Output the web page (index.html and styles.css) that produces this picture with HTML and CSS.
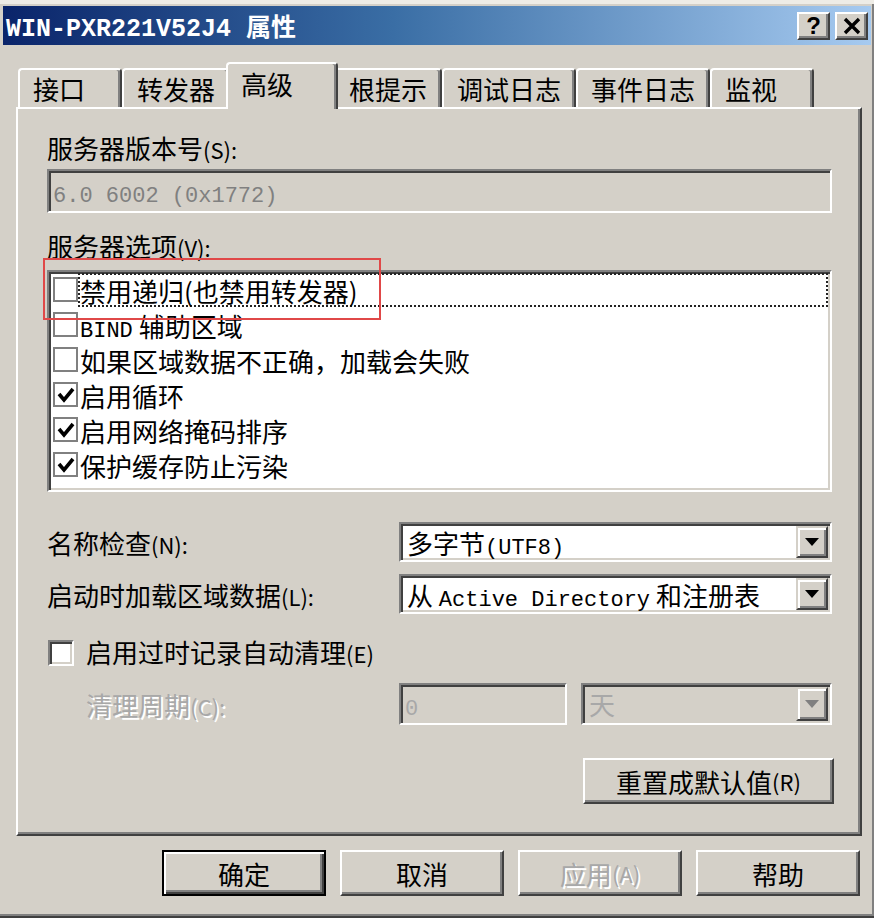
FILE: index.html
```html
<!DOCTYPE html>
<html lang="zh-CN">
<head>
  <meta charset="UTF-8" />
  <title>WIN-PXR221V52J4 属性</title>
  <link rel="stylesheet" href="styles.css">
</head>
<body>

<div class="window">
  <div class="titlebar">
    <span class="title">WIN-PXR221V52J4 属性</span>
    <div class="title-buttons">
      <span class="tbtn">?</span>
      <span class="tbtn">
        <svg width="18" height="18" viewBox="0 0 18 18"><path d="M2 2 L16 16 M16 2 L2 16" stroke="#000" stroke-width="3.4"/></svg>
      </span>
    </div>
  </div>

  <div class="tabs">
    <div class="tab">接口</div>
    <div class="tab">转发器</div>
    <div class="tab active">高级</div>
    <div class="tab">根提示</div>
    <div class="tab">调试日志</div>
    <div class="tab">事件日志</div>
    <div class="tab">监视</div>
  </div>

  <div class="panel">
    <div class="label">服务器版本号<span class="acc">(S):</span></div>
    <div class="field version"><span class="mono">6.0 6002 (0x1772)</span></div>

    <div class="label options-label">服务器选项<span class="acc">(V):</span></div>
    <div class="field listbox">
      <div class="row">
        <span class="cb"></span>
        <span class="item focus">禁用递归(也禁用转发器)</span>
      </div>
      <div class="row">
        <span class="cb"></span>
        <span class="item"><span class="mono">BIND</span> 辅助区域</span>
      </div>
      <div class="row">
        <span class="cb"></span>
        <span class="item">如果区域数据不正确，加载会失败</span>
      </div>
      <div class="row">
        <span class="cb"><svg width="20" height="20" viewBox="0 0 20 20"><path d="M3 9 L8 15 L17 4" fill="none" stroke="#000" stroke-width="3.6"/></svg></span>
        <span class="item">启用循环</span>
      </div>
      <div class="row">
        <span class="cb"><svg width="20" height="20" viewBox="0 0 20 20"><path d="M3 9 L8 15 L17 4" fill="none" stroke="#000" stroke-width="3.6"/></svg></span>
        <span class="item">启用网络掩码排序</span>
      </div>
      <div class="row">
        <span class="cb"><svg width="20" height="20" viewBox="0 0 20 20"><path d="M3 9 L8 15 L17 4" fill="none" stroke="#000" stroke-width="3.6"/></svg></span>
        <span class="item">保护缓存防止污染</span>
      </div>
    </div>

    <div class="form-row first">
      <div class="form-label">名称检查<span class="acc">(N):</span></div>
      <div class="field combo">
        <span class="combo-text">多字节<span class="mono">(UTF8)</span></span>
        <span class="drop"><span class="arrow"></span></span>
      </div>
    </div>
    <div class="form-row">
      <div class="form-label">启动时加载区域数据<span class="acc">(L):</span></div>
      <div class="field combo">
        <span class="combo-text">从 <span class="mono">Active Directory</span> 和注册表</span>
        <span class="drop"><span class="arrow"></span></span>
      </div>
    </div>

    <div class="check-row">
      <span class="cb3d"></span>
      <span>启用过时记录自动清理<span class="acc">(E)</span></span>
    </div>

    <div class="form-row period">
      <div class="form-label disabled">清理周期<span class="acc">(C):</span></div>
      <div class="field small-input"><span class="mono">0</span></div>
      <div class="field combo off">
        <span class="combo-text">天</span>
        <span class="drop"><span class="arrow"></span></span>
      </div>
    </div>

    <div class="btn reset">重置成默认值<span class="acc">(R)</span></div>
  </div>

  <div class="actions">
    <div class="btn default">确定</div>
    <div class="btn">取消</div>
    <div class="btn disabled">应用<span class="acc">(A)</span></div>
    <div class="btn">帮助</div>
  </div>

  <div class="highlight"></div>
</div>

</body>
</html>
```

FILE: styles.css
```css
* {
  box-sizing: border-box;
}
body {
  margin: 0;
  background: #d4d0c8;
  font-family: "Noto Sans CJK SC", "Noto Sans", sans-serif;
  font-size: 26px;
  color: #000;
}
.mono {
  font-family: "Liberation Mono", "Noto Sans CJK SC", monospace;
  font-size: 22px;
}
.acc {
  font-size: 22px;
}
/* Fenster */
.window {
  position: relative;
  width: 874px;
  height: 918px;
  display: flex;
  flex-direction: column;
  padding: 2px 3px 0;
  border-top: 4px solid #eeece6;
  background: #d4d0c8;
  box-shadow: inset 0 -2px #404040, inset 0 -4px #808080, inset -2px 0 #808080;
}
.titlebar {
  height: 39px;
  display: flex;
  align-items: center;
  justify-content: space-between;
  padding: 0 3px 0 3px;
  background: linear-gradient(90deg, #0a246a 0%, #3a6ea5 45%, #a6caf0 100%);
}
.title {
  color: #fff;
  font-family: "Liberation Mono", "Noto Sans CJK SC", monospace;
  font-weight: bold;
  font-size: 25px;
  white-space: nowrap;
}
.title-buttons {
  display: flex;
  gap: 5px;
}
.tbtn {
  width: 33px;
  height: 28px;
  display: flex;
  align-items: center;
  justify-content: center;
  background: #d4d0c8;
  border: 2px solid;
  border-color: #fff #404040 #404040 #fff;
  box-shadow: inset -2px -2px #808080;
  font-family: "Liberation Sans", sans-serif;
  font-weight: bold;
  font-size: 24px;
  line-height: 1;
}
/* Reiter */
.tabs {
  display: flex;
  align-items: flex-end;
  height: 45px;
  margin-top: 17px;
  padding-left: 15px;
  position: relative;
  z-index: 2;
}
.tab {
  min-width: 104px;
  height: 39px;
  padding: 0 13px;
  line-height: 38px;
  background: #d4d0c8;
  border: 2px solid;
  border-bottom: none;
  border-color: #fff #404040 transparent #fff;
  border-radius: 4px 4px 0 0;
  box-shadow: inset -2px 0 #808080;
  white-space: nowrap;
}
.tab.active {
  min-width: 112px;
  height: 47px;
  margin: 0 -4px -2px;
  line-height: 40px;
  position: relative;
  z-index: 3;
}
.panel {
  height: 729px;
  margin: 0 9px 0 13px;
  display: flex;
  flex-direction: column;
  padding: 24px 28px 0 29px;
  border: 2px solid;
  border-color: #fff #404040 #404040 #fff;
  box-shadow: inset -2px -2px #808080;
  position: relative;
  z-index: 1;
}
.label {
  line-height: 30px;
  white-space: nowrap;
}
.field {
  border: 2px solid;
  border-color: #808080 #fff #fff #808080;
  box-shadow: inset 2px 2px #404040, inset -2px -2px #d4d0c8;
}
.version {
  height: 44px;
  margin-top: 5px;
  padding-left: 4px;
  line-height: 40px;
  color: #808080;
}
.options-label {
  margin-top: 18px;
}
.listbox {
  height: 222px;
  margin-top: 8px;
  padding: 0 2px 0 4px;
  background: #fff;
}
.row {
  height: 35px;
  display: flex;
  align-items: center;
}
.cb {
  width: 25px;
  height: 25px;
  flex: none;
  display: flex;
  align-items: center;
  justify-content: center;
  border: 2px solid #808080;
  background: #fff;
}
.item {
  flex: 1;
  height: 34px;
  line-height: 32px;
  border: 2px dotted transparent;
  white-space: nowrap;
}
.item.focus {
  border-color: #222;
}
/* Formularzeilen */
.form-row {
  display: flex;
  align-items: center;
  margin-top: 12px;
}
.form-row.first {
  margin-top: 30px;
}
.form-label {
  width: 352px;
  flex: none;
  white-space: nowrap;
}
.combo {
  flex: 1;
  height: 40px;
  display: flex;
  align-items: stretch;
  background: #fff;
  padding: 2px;
}
.combo-text {
  flex: 1;
  padding-left: 4px;
  line-height: 34px;
  white-space: nowrap;
}
.drop {
  width: 32px;
  display: flex;
  align-items: center;
  justify-content: center;
  background: #d4d0c8;
  border: 2px solid;
  border-color: #d4d0c8 #404040 #404040 #d4d0c8;
  box-shadow: inset 2px 2px #fff, inset -2px -2px #808080;
}
.arrow {
  width: 0;
  height: 0;
  border-left: 7px solid transparent;
  border-right: 7px solid transparent;
  border-top: 8px solid #000;
}
.check-row {
  display: flex;
  align-items: center;
  gap: 12px;
  margin-top: 23px;
  margin-left: 1px;
  line-height: 30px;
}
.cb3d {
  width: 26px;
  height: 26px;
  background: #fff;
  border: 2px solid;
  border-color: #808080 #fff #fff #808080;
  box-shadow: inset 2px 2px #404040, inset -2px -2px #d4d0c8;
}
.period {
  margin-top: 15px;
}
.period .form-label {
  padding-left: 39px;
}
.disabled {
  color: #a8a8a8;
  text-shadow: 2px 2px #fff;
}
.small-input {
  width: 168px;
  height: 42px;
  padding-left: 4px;
  line-height: 38px;
  color: #a8a8a8;
}
.combo.off {
  margin-left: 14px;
  height: 42px;
  background: #d4d0c8;
  color: #a8a8a8;
}
.combo.off .arrow {
  border-top-color: #808080;
}
/* Schaltflächen */
.btn {
  height: 46px;
  display: flex;
  align-items: center;
  justify-content: center;
  background: #d4d0c8;
  border: 2px solid;
  border-color: #fff #404040 #404040 #fff;
  box-shadow: inset -2px -2px #808080;
  white-space: nowrap;
}
.reset {
  width: 251px;
  margin-top: 33px;
  margin-right: -2px;
  align-self: flex-end;
}
.actions {
  display: flex;
  justify-content: flex-end;
  gap: 14px;
  margin-top: 14px;
  padding-right: 11px;
}
.actions .btn {
  width: 164px;
}
.btn.default {
  border-color: #000;
  box-shadow: inset 2px 2px #fff, inset -2px -2px #404040, inset -4px -4px #808080;
}
.btn.disabled {
  color: #a8a8a8;
  text-shadow: 2px 2px #fff;
}
/* rote Markierung */
.highlight {
  position: absolute;
  left: 43px;
  top: 254px;
  width: 338px;
  height: 62px;
  border: 2px solid #e04848;
  z-index: 5;
}
```
